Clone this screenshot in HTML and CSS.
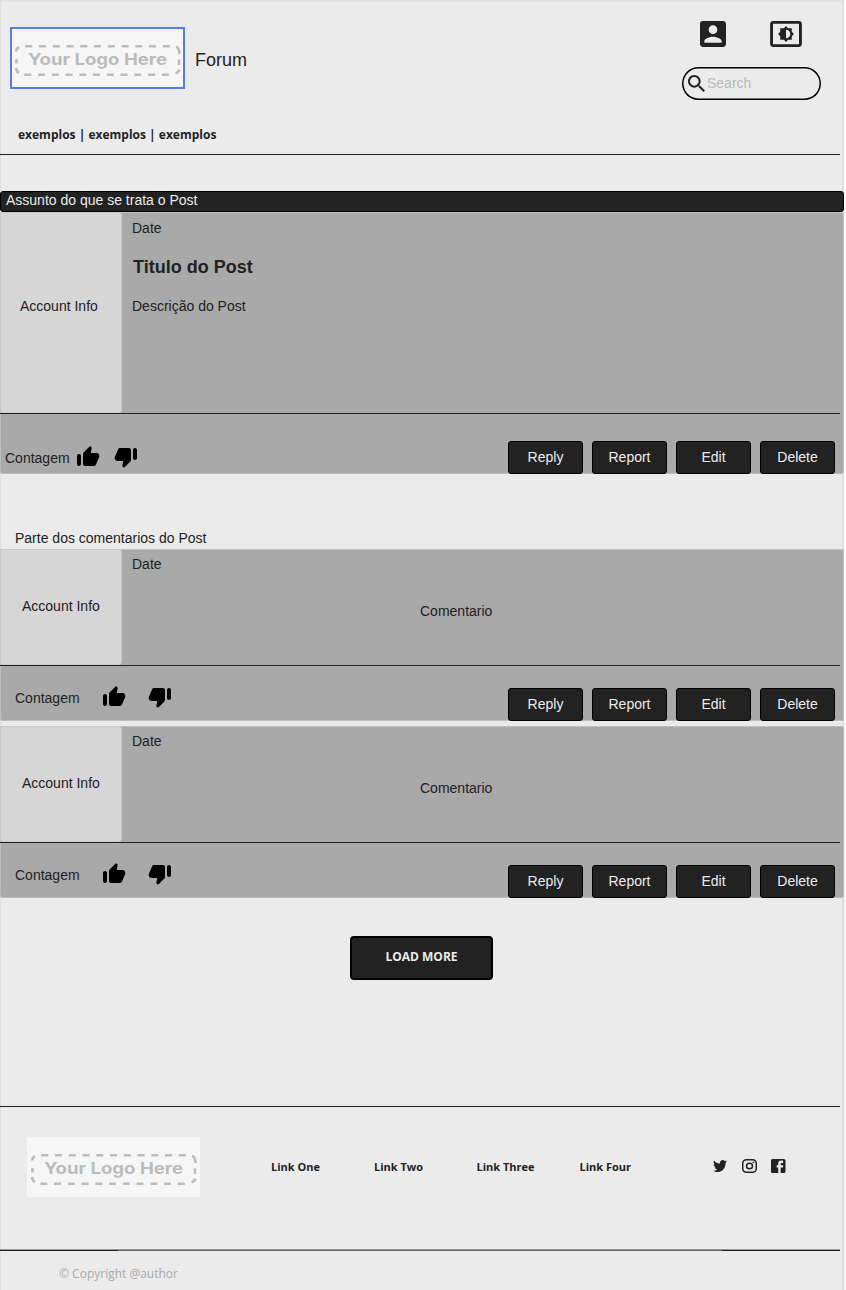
FILE: index.html
```
<!DOCTYPE html>
<html lang="pt">
<head>
<meta charset="utf-8">
<title>Forum</title>
<link rel="stylesheet" href="styles.css">
</head>
<body>
<svg class="defs" aria-hidden="true">
  <symbol id="logo-frame" viewBox="0 0 173 60">
    <rect width="173" height="60" fill="#f6f6f6"/>
    <g fill="none" stroke="#bcbcbc" stroke-width="2.6">
      <path d="M14.3 18.3H159" stroke-dasharray="7 6.75"/>
      <path d="M13.3 46.7H158" stroke-dasharray="7 6.75"/>
      <path d="M5 23.5Q5.3 20.3 8 19.1M5.4 31v4.5M5 40Q5.4 43.6 7.8 44.9M165 18.8Q168.6 20 168.3 26M168 31.5v5.5M168.4 41.5Q168 44 164.5 45.4"/>
    </g>
  </symbol>
  <symbol id="up" viewBox="0 0 24 24"><path d="M13.12 2.06L7.58 7.6c-.37.37-.58.88-.58 1.41V19c0 1.1.9 2 2 2h9c.8 0 1.52-.48 1.84-1.21l3.26-7.61C23.94 10.2 22.49 8 20.34 8h-5.65l.95-4.58c.1-.5-.05-1.01-.41-1.37-.59-.58-1.53-.58-2.11.01zM3 21c1.1 0 2-.9 2-2v-8c0-1.1-.9-2-2-2s-2 .9-2 2v8c0 1.1.9 2 2 2z"/></symbol>
  <symbol id="down" viewBox="0 0 24 24"><path d="M10.88 21.94l5.53-5.54c.37-.37.58-.88.58-1.41V5c0-1.1-.9-2-2-2H6c-.8 0-1.52.48-1.83 1.21L.91 11.82C.06 13.8 1.51 16 3.66 16h5.65l-.95 4.58c-.1.5.05 1.01.41 1.37.59.58 1.53.58 2.11-.01zM21 3c-1.1 0-2 .9-2 2v8c0 1.1.9 2 2 2s2-.9 2-2V5c0-1.1-.9-2-2-2z"/></symbol>
</svg>
<div class="page">
  <header class="header">
    <div class="brand">
      <svg class="logo logo-selected" viewBox="0 0 173 60"><use href="#logo-frame"/><text class="logo-text" x="17" y="37" textLength="139" lengthAdjust="spacingAndGlyphs">Your Logo Here</text></svg>
      <span class="brand-name">Forum</span>
    </div>
    <div class="tools">
      <div class="tool-icons">
        <svg width="26" height="26" viewBox="3 3 18 18"><path d="M3 5v14c0 1.1.89 2 2 2h14c1.1 0 2-.9 2-2V5c0-1.1-.9-2-2-2H5c-1.11 0-2 .9-2 2zm12 4c0 1.66-1.34 3-3 3s-3-1.34-3-3 1.34-3 3-3 3 1.34 3 3zm-9 8c0-2 4-3.1 6-3.1s6 1.1 6 3.1v1H6v-1z"/></svg>
        <svg width="32" height="26" viewBox="1 3 22 18"><path d="M21 3H3c-1.1 0-2 .9-2 2v14c0 1.1.9 2 2 2h18c1.1 0 2-.9 2-2V5c0-1.1-.9-2-2-2zm0 16.01H3V4.99h18v14.02zM8 16h2.5l1.5 1.5 1.5-1.5H16v-2.5l1.5-1.5-1.5-1.5V8h-2.5L12 6.5 10.5 8H8v2.5L6.5 12 8 13.5V16zm4-7c1.66 0 3 1.34 3 3s-1.34 3-3 3V9z"/></svg>
      </div>
      <div class="search">
        <svg width="17" height="17" viewBox="3 3 17.5 17.5"><path d="M15.5 14h-.79l-.28-.27C15.41 12.59 16 11.11 16 9.5 16 5.91 13.09 3 9.5 3S3 5.91 3 9.5 5.91 16 9.5 16c1.61 0 3.09-.59 4.23-1.57l.27.28v.79l5 4.99L20.49 19l-4.99-5zm-6 0C7.01 14 5 11.99 5 9.5S7.01 5 9.5 5 14 7.01 14 9.5 11.99 14 9.5 14z"/></svg>
        <span>Search</span>
      </div>
    </div>
  </header>
  <nav class="crumbs">exemplos | exemplos | exemplos</nav>
  <div class="rule"></div>

  <div class="subject">Assunto do que se trata o Post</div>
  <article class="card post">
    <div class="row">
      <div class="account">Account Info</div>
      <div class="body">
        <div>Date</div>
        <h1 class="title">Titulo do Post</h1>
        <div>Descrição do Post</div>
      </div>
    </div>
    <div class="rule"></div>
    <div class="actions">
      <span class="count">Contagem</span>
      <svg class="thumb"><use href="#up"/></svg>
      <svg class="thumb"><use href="#down"/></svg>
      <div class="buttons"><button class="btn">Reply</button><button class="btn">Report</button><button class="btn">Edit</button><button class="btn">Delete</button></div>
    </div>
  </article>

  <h2 class="section">Parte dos comentarios do Post</h2>
  <article class="card comment">
    <div class="row">
      <div class="account">Account Info</div>
      <div class="body">
        <div>Date</div>
        <div class="text">Comentario</div>
      </div>
    </div>
    <div class="rule"></div>
    <div class="actions">
      <span class="count">Contagem</span>
      <svg class="thumb"><use href="#up"/></svg>
      <svg class="thumb"><use href="#down"/></svg>
      <div class="buttons"><button class="btn">Reply</button><button class="btn">Report</button><button class="btn">Edit</button><button class="btn">Delete</button></div>
    </div>
  </article>
  <article class="card comment">
    <div class="row">
      <div class="account">Account Info</div>
      <div class="body">
        <div>Date</div>
        <div class="text">Comentario</div>
      </div>
    </div>
    <div class="rule"></div>
    <div class="actions">
      <span class="count">Contagem</span>
      <svg class="thumb"><use href="#up"/></svg>
      <svg class="thumb"><use href="#down"/></svg>
      <div class="buttons"><button class="btn">Reply</button><button class="btn">Report</button><button class="btn">Edit</button><button class="btn">Delete</button></div>
    </div>
  </article>
  <button class="load-more">LOAD MORE</button>

  <footer class="footer">
    <div class="rule"></div>
    <div class="footer-main">
      <svg class="logo" viewBox="0 0 173 60"><use href="#logo-frame"/><text class="logo-text" x="17" y="37" textLength="139" lengthAdjust="spacingAndGlyphs">Your Logo Here</text></svg>
      <div class="links"><a>Link One</a><a>Link Two</a><a>Link Three</a><a>Link Four</a></div>
      <div class="social">
        <svg width="14" height="12" viewBox="1.5 4 21 17" preserveAspectRatio="none"><path d="M22.46 6c-.77.35-1.6.58-2.46.69.88-.53 1.56-1.37 1.88-2.38-.83.5-1.75.85-2.72 1.05C18.37 4.5 17.26 4 16 4c-2.35 0-4.27 1.92-4.27 4.29 0 .34.04.67.11.98C8.28 9.09 5.11 7.38 3 4.79c-.37.63-.58 1.37-.58 2.15 0 1.49.75 2.81 1.91 3.56-.71 0-1.37-.2-1.95-.5v.03c0 2.08 1.48 3.82 3.44 4.21a4.22 4.22 0 0 1-1.93.07 4.28 4.28 0 0 0 4 2.98 8.521 8.521 0 0 1-5.33 1.84c-.34 0-.68-.02-1.02-.06C3.44 20.29 5.7 21 8.12 21 16 21 20.33 14.46 20.33 8.79c0-.19 0-.37-.01-.56.84-.6 1.56-1.36 2.14-2.23z"/></svg>
        <svg width="15" height="14" viewBox="2 2 20 20" preserveAspectRatio="none"><path d="M7.8 2h8.4C19.4 2 22 4.6 22 7.8v8.4a5.8 5.8 0 0 1-5.8 5.8H7.8C4.6 22 2 19.4 2 16.2V7.8A5.8 5.8 0 0 1 7.8 2m-.2 2A3.6 3.6 0 0 0 4 7.6v8.8C4 18.39 5.61 20 7.6 20h8.8a3.6 3.6 0 0 0 3.6-3.6V7.6C20 5.61 18.39 4 16.4 4H7.6m9.65 1.5a1.25 1.25 0 1 1 0 2.5 1.25 1.25 0 0 1 0-2.5M12 7a5 5 0 1 1 0 10 5 5 0 0 1 0-10m0 2a3 3 0 1 0 0 6 3 3 0 0 0 0-6z"/></svg>
        <svg width="14.5" height="14" viewBox="3 3 18 18" preserveAspectRatio="none"><path d="M5 3H19A2 2 0 0 1 21 5V19A2 2 0 0 1 19 21H5A2 2 0 0 1 3 19V5A2 2 0 0 1 5 3M18 5H15.5A3.5 3.5 0 0 0 12 8.5V11H10V14H12V21H15V14H18V11H15V9A1 1 0 0 1 16 8H18V5Z"/></svg>
      </div>
    </div>
    <div class="double-rule"></div>
    <div class="copyright">© Copyright @author</div>
  </footer>
</div>
</body>
</html>
```

FILE: styles.css
```
* { box-sizing: border-box; }
html { background: linear-gradient(#fff 723px, #f2f2f2 723px); }
body {
  margin: 0;
  font: 14px/16px "Liberation Sans", Arial, sans-serif;
  color: #222;
}
svg { display: block; flex: none; fill: #222; }
.defs { position: absolute; width: 0; height: 0; }
.page {
  width: 844px;
  height: 1290px;
  overflow: hidden;
  background: #ebebeb;
  box-shadow: inset 1px 0 #dfdfdf, inset -2px 0 #e0e0e0, inset 0 2px #e2e2e2;
  display: flex;
  flex-direction: column;
}
.rule { width: 840px; height: 1px; background: #222; flex: none; }

.header { display: flex; justify-content: space-between; height: 127px; flex: none; }
.brand { display: flex; padding: 28px 0 0 11px; }
.logo { width: 173px; height: 60px; }
.logo-selected { outline: 2px solid #577de0; outline-offset: -1px; }
.logo-text { font: 700 16px Inter, sans-serif; fill: #bcbcbc; }
.brand-name { font-size: 18px; line-height: 20px; margin: 22px 0 0 11px; }
.tools { width: 162px; padding-top: 21px; }
.tool-icons { display: flex; gap: 44px; padding-left: 18px; }
.search {
  display: flex;
  gap: 2px;
  width: 139px;
  height: 33px;
  margin-top: 20px;
  padding: 8px 0 0 6px;
  border-radius: 17px;
  box-shadow: inset 0 0 0 1.5px #000;
  color: #b9b9b9;
}
.crumbs {
  font: 700 12px/16px "Open Sans", sans-serif;
  padding-left: 18px;
  height: 27px;
}

.subject {
  height: 21px;
  margin-top: 36px;
  padding-left: 5px;
  line-height: 16px;
  color: #ebebeb;
  background: #222;
  border: 1px solid #000;
  border-radius: 3px;
  flex: none;
}
.card {
  flex: none;
  display: flex;
  flex-direction: column;
  background: #a9a9a9;
  border-radius: 3px;
  box-shadow: inset 0 0 0 1px #bebebe;
}
.post { height: 262px; }
.post .row { height: 201px; }
.row { display: flex; }
.account {
  width: 122px;
  background: #d6d6d6;
  border: 1px solid #c8c8c8;
  border-radius: 3px;
}
.post .account { padding: 85px 0 0 19px; }
.body { padding: 8px 0 0 10px; }
.title { font-size: 18px; line-height: 20px; margin: 21px 0 21px 1px; }
.actions { display: flex; flex: 1; }
.count { width: 76px; padding-left: 5px; }
.thumb { width: 24px; height: 24px; fill: #000; }
.thumb + .thumb { margin-left: 14px; }
.post .count { margin-top: 36px; }
.post .thumb { margin-top: 31px; }
.buttons { display: flex; gap: 9px; margin: auto 9px 0 auto; }
.btn {
  width: 75px;
  height: 33px;
  padding: 0 0 2px;
  font: inherit;
  color: #ebebeb;
  background: #222;
  border: 1px solid #000;
  border-radius: 3px;
}

.section { font-size: 14px; font-weight: 400; line-height: 16px; margin: 56px 0 3px 15px; }
.comment { height: 172px; }
.comment + .comment { margin-top: 5px; }
.comment .row { height: 116px; }
.comment .account { padding: 48px 0 0 21px; }
.comment .body { padding-top: 7px; }
.text { margin: 31px 0 0 288px; }
.comment .count { width: 102px; padding: 24px 0 0 15px; }
.comment .thumb { margin-top: 19px; }
.comment .thumb + .thumb { margin-left: 22px; }

.load-more {
  align-self: flex-start;
  flex: none;
  width: 143px;
  height: 44px;
  margin: 38px 0 0 350px;
  padding: 0 0 3px;
  font: 700 12px/16px "Open Sans", sans-serif;
  color: #ebebeb;
  background: #222;
  border: 2px solid #000;
  border-radius: 4px;
}

.footer { margin-top: 126px; font-family: "Open Sans", sans-serif; }
.footer-main { display: flex; height: 142px; padding: 30px 0 0 27px; }
.links {
  display: grid;
  grid-template-columns: 103px 102.5px 103px 100px;
  margin: 22px 0 0 71px;
  font-size: 11px;
  font-weight: 700;
}
.social { display: flex; gap: 14.5px; margin: 22px 0 0 33.5px; }
.social svg:first-child { margin-top: 1px; }
.double-rule {
  width: 840px;
  height: 2px;
  background:
    linear-gradient(#949494, #949494) 0 0 / 840px 1px no-repeat,
    linear-gradient(90deg, #222 118px, #686868 118px 722px, #222 722px);
}
.copyright { padding: 15px 0 0 59px; font-size: 12px; color: #a9a9a9; }
```
